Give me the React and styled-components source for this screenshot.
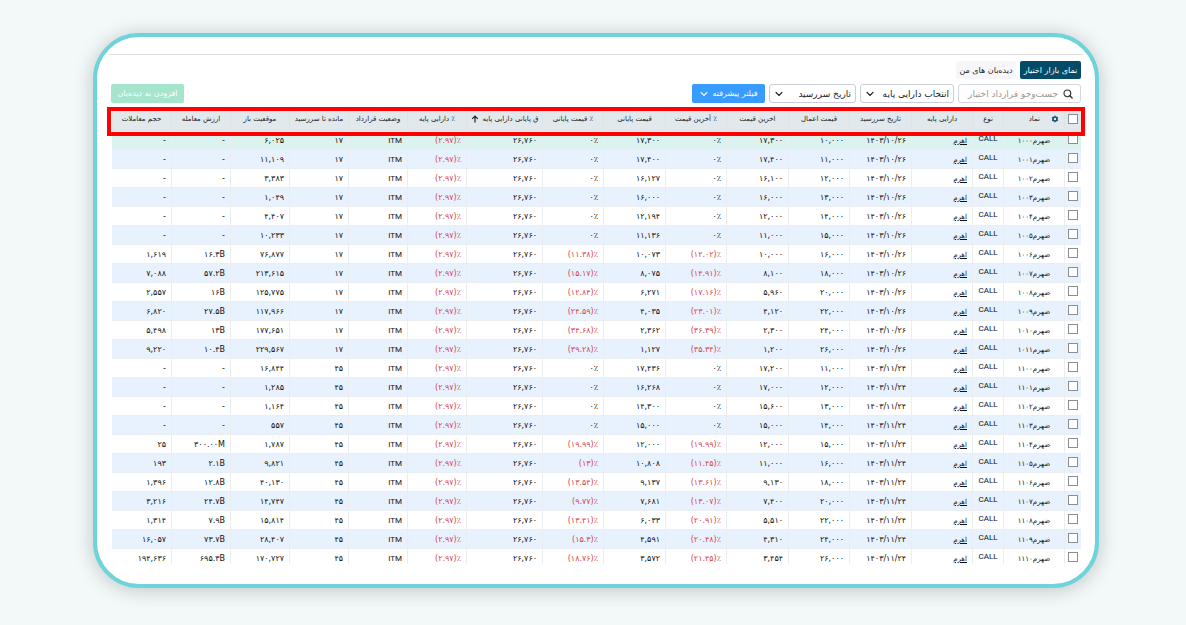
import React from 'react'
import styled, { createGlobalStyle } from 'styled-components'

const columns = [
  { key: 'check', width: 17 },
  { key: 'symbol', width: 61, title: 'نماد' },
  { key: 'type', width: 31, title: 'نوع' },
  { key: 'base', width: 61, title: 'دارایی پایه' },
  { key: 'date', width: 62, title: 'تاریخ سررسید' },
  { key: 'strike', width: 61, title: 'قیمت اعمال' },
  { key: 'last', width: 62, title: 'اخرین قیمت' },
  { key: 'lastPct', width: 61, title: '٪ آخرین قیمت' },
  { key: 'close', width: 62, title: 'قیمت پایانی' },
  { key: 'closePct', width: 61, title: '٪ قیمت پایانی' },
  { key: 'baseClose', width: 76, title: 'ق پایانی دارایی پایه' },
  { key: 'basePct', width: 59, title: '٪ دارایی پایه' },
  { key: 'status', width: 59, title: 'وضعیت قرارداد' },
  { key: 'days', width: 59, title: 'مانده تا سررسید' },
  { key: 'open', width: 59, title: 'موقعیت باز' },
  { key: 'value', width: 59, title: 'ارزش معامله' },
  { key: 'volume', width: 60, title: 'حجم معاملات' },
]

// symbol, strike, last, last %, close, close %, open positions, value, volume
const contracts = [
  ['1000', '10,000', '17,300', '0', '17,300', '0', '6,025', '-', '-'],
  ['1001', '11,000', '17,400', '0', '17,400', '0', '11,109', '-', '-'],
  ['1002', '12,000', '16,100', '0', '16,127', '0', '3,383', '-', '-'],
  ['1003', '13,000', '16,000', '0', '16,000', '0', '1,049', '-', '-'],
  ['1004', '14,000', '12,000', '0', '12,194', '0', '4,407', '-', '-'],
  ['1005', '15,000', '11,000', '0', '11,136', '0', '10,233', '-', '-'],
  ['1006', '16,000', '10,000', '(12.02)', '10,073', '(11.38)', '76,877', '16.3B', '1,619'],
  ['1007', '18,000', '8,100', '(14.91)', '8,075', '(15.17)', '213,615', '57.2B', '7,088'],
  ['1008', '20,000', '5,960', '(17.16)', '6,271', '(12.84)', '125,775', '16B', '2,557'],
  ['1009', '22,000', '4,120', '(23.01)', '4,035', '(24.59)', '117,966', '27.5B', '6,820'],
  ['1010', '24,000', '2,300', '(36.39)', '2,362', '(34.68)', '177,651', '13B', '5,498'],
  ['1011', '26,000', '1,200', '(35.34)', '1,127', '(39.28)', '229,567', '10.4B', '9,220'],
  ['1100', '11,000', '17,200', '0', '17,436', '0', '16,844', '-', '-'],
  ['1101', '12,000', '17,000', '0', '16,268', '0', '1,285', '-', '-'],
  ['1102', '13,000', '15,600', '0', '14,300', '0', '1,164', '-', '-'],
  ['1103', '14,000', '15,000', '0', '15,000', '0', '557', '-', '-'],
  ['1104', '15,000', '12,000', '(19.99)', '12,000', '(19.99)', '1,787', '300.00M', '25'],
  ['1105', '16,000', '11,000', '(11.45)', '10,808', '(13)', '9,821', '2.1B', '193'],
  ['1106', '18,000', '9,130', '(13.61)', '9,137', '(13.54)', '40,130', '12.8B', '1,396'],
  ['1107', '20,000', '7,400', '(13.07)', '7,681', '(9.77)', '14,747', '24.7B', '3,216'],
  ['1108', '22,000', '5,510', '(20.91)', '6,033', '(13.41)', '15,814', '7.9B', '1,314'],
  ['1109', '24,000', '4,310', '(20.48)', '4,591', '(15.3)', '28,407', '73.7B', '16,057'],
  ['1110', '26,000', '3,454', '(21.45)', '3,572', '(18.76)', '170,727', '695.3B', '194,636'],
]

const fa = (text) => text.replace(/\d/g, (d) => '۰۱۲۳۴۵۶۷۸۹'[d])

const Chevron = () => (
  <svg width='8' height='8' viewBox='0 0 8 8' aria-hidden='true'>
    <path d='M1 2.3 4 5.5 7 2.3' fill='none' stroke='currentColor' strokeWidth='1.1' strokeLinecap='round' />
  </svg>
)

const SearchIcon = () => (
  <svg width='10' height='10' viewBox='0 0 11 11' aria-hidden='true'>
    <circle cx='4.8' cy='4.8' r='3.7' fill='none' stroke='#333' strokeWidth='1.3' />
    <path d='M7.5 7.5 10 10' stroke='#333' strokeWidth='1.6' strokeLinecap='round' />
  </svg>
)

const GearIcon = () => (
  <svg width='8' height='8' viewBox='0 0 8 8' aria-hidden='true'>
    <circle cx='4' cy='4' r='2' fill='none' stroke='#0b5272' strokeWidth='1.6' />
    <path
      d='M4 .8v.8M4 6.4v.8M1.2 2.4l.8.4M6 5.2l.8.4M6.8 2.4l-.8.4M2 5.2l-.8.4'
      stroke='#0b5272'
      strokeWidth='1.6'
    />
  </svg>
)

const ArrowUp = () => (
  <svg width='8' height='8' viewBox='0 0 8 8' aria-hidden='true'>
    <path d='M4 7.4V1.2M1.2 3.8 4 1l2.8 2.8' fill='none' stroke='#222' strokeWidth='1.2' />
  </svg>
)

const Picker = ({ label, width }) => (
  <PickerBox $width={width}>
    <select aria-label={label}>
      <option>{label}</option>
    </select>
    <Chevron />
  </PickerBox>
)

const HeaderCell = ({ column }) => {
  if (column.key === 'check') {
    return (
      <th>
        <Check type='checkbox' aria-label='انتخاب همه' />
      </th>
    )
  }
  return (
    <th>
      {column.key === 'symbol' ? (
        <SymbolTitle>
          <IconButton type='button' aria-label='تنظیمات ستون‌ها'>
            <GearIcon />
          </IconButton>
          {column.title}
        </SymbolTitle>
      ) : column.key === 'baseClose' ? (
        <SortTitle>
          {column.title}
          <ArrowUp />
        </SortTitle>
      ) : (
        column.title
      )}
    </th>
  )
}

const Percent = ({ value }) => <Num $down={value !== '0'}>{fa(value)}٪</Num>

const ContractRow = ({ contract }) => {
  const [symbol, strike, last, lastPct, close, closePct, open, value, volume] = contract
  const far = symbol.startsWith('11')
  return (
    <tr>
      <CheckCell>
        <Check type='checkbox' aria-label={'ضهرم' + fa(symbol)} />
      </CheckCell>
      <SymbolCell>ضهرم{fa(symbol)}</SymbolCell>
      <TypeCell>CALL</TypeCell>
      <BaseCell>
        <a href='#ahrom'>اهرم</a>
      </BaseCell>
      <Num>{fa(far ? '1403/11/24' : '1403/10/26')}</Num>
      <Num>{fa(strike)}</Num>
      <Num>{fa(last)}</Num>
      <Percent value={lastPct} />
      <Num>{fa(close)}</Num>
      <Percent value={closePct} />
      <Num>{fa('26,760')}</Num>
      <Percent value='(2.97)' />
      <Status>ITM</Status>
      <Num>{fa(far ? '45' : '17')}</Num>
      <Num>{fa(open)}</Num>
      <Num>{fa(value)}</Num>
      <Num>{fa(volume)}</Num>
    </tr>
  )
}

const App = () => {
  return (
    <Page dir='rtl' lang='fa'>
      <GlobalStyle />
      <Frame>
        <Tabs>
          <Tab type='button' $active>
            نمای بازار اختیار
          </Tab>
          <Tab type='button'>دیده‌بان های من</Tab>
        </Tabs>
        <Toolbar>
          <Search>
            <SearchIcon />
            <input type='text' aria-label='جست‌وجو' placeholder='جست‌وجو قرارداد اختیار' />
          </Search>
          <Picker label='انتخاب دارایی پایه' width={94} />
          <Picker label='تاریخ سررسید' width={87} />
          <FilterButton type='button'>
            فیلتر پیشرفته
            <Chevron />
          </FilterButton>
          <AddButton type='button'>افزودن به دیده‌بان</AddButton>
        </Toolbar>
        <Board>
          <Clip>
            <Table>
              <colgroup>
                {columns.map((c) => (
                  <Col key={c.key} $width={c.width} />
                ))}
              </colgroup>
              <thead>
                <tr>
                  {columns.map((c) => (
                    <HeaderCell key={c.key} column={c} />
                  ))}
                </tr>
              </thead>
              <tbody>
                {contracts.map((c) => (
                  <ContractRow key={c[0]} contract={c} />
                ))}
              </tbody>
            </Table>
          </Clip>
          <Highlight />
        </Board>
      </Frame>
    </Page>
  )
}

const GlobalStyle = createGlobalStyle`
  * {
    box-sizing: border-box;
  }
  body {
    margin: 0;
    background: #f3f9f9;
    color: #111;
    font-family: 'DejaVu Sans', sans-serif;
    font-size: 8px;
  }
  button, input, select {
    font-family: inherit;
    margin: 0;
  }
`

const Page = styled.main`
  display: flex;
  height: 100vh;
  padding: 33px 87px 37px 93px;
`

const Frame = styled.section`
  flex: 1;
  min-width: 0;
  display: flex;
  flex-direction: column;
  padding: 17px 12px 20px;
  background: #fff;
  border: 4px solid #6fd3da;
  border-radius: 46px;
  box-shadow: 0 2px 20px rgba(0, 0, 0, 0.22);
`

const Tabs = styled.nav`
  display: flex;
  gap: 4px;
  padding: 6px 2px 5px 0;
  border-top: 1px solid #dedede;
`

const Tab = styled.button`
  width: ${(p) => (p.$active ? '61px' : '60px')};
  height: 18px;
  padding: 0;
  border: 0;
  border-radius: 2px;
  background: ${(p) => (p.$active ? '#034b67' : '#f7f7f9')};
  color: ${(p) => (p.$active ? '#fff' : '#222')};
  font-size: 8px;
  white-space: nowrap;
`

const Toolbar = styled.div`
  display: flex;
  gap: 4px;
  padding: 0 2px;
`

const Search = styled.label`
  display: flex;
  align-items: center;
  gap: 5px;
  width: 123px;
  height: 19px;
  padding: 0 7px;
  border: 1px solid #d3d8df;
  border-radius: 3px;
  input {
    flex: 1;
    min-width: 0;
    padding: 0;
    border: 0;
    outline: 0;
    background: none;
    font-size: 9px;
  }
  input::placeholder {
    color: #999;
  }
`

const PickerBox = styled.div`
  display: flex;
  align-items: center;
  width: ${(p) => p.$width}px;
  height: 19px;
  padding: 0 4px 0 5px;
  border: 1px solid #c9ced8;
  border-radius: 3px;
  select {
    flex: 1;
    min-width: 0;
    padding: 0;
    border: 0;
    appearance: none;
    background: none;
    color: #222;
    font-size: 9px;
  }
`

const FilterButton = styled.button`
  display: flex;
  align-items: center;
  justify-content: center;
  gap: 5px;
  width: 73px;
  height: 19px;
  padding: 0;
  border: 0;
  border-radius: 2px;
  background: #379bff;
  color: #fff;
  font-size: 8px;
  white-space: nowrap;
`

const AddButton = styled(FilterButton)`
  margin-right: auto;
  background: #a5e5ce;
`

const Board = styled.div`
  flex: 1;
  min-height: 0;
  position: relative;
  display: flex;
  margin-top: 7px;
  padding: 0 2px 0 3px;
`

const Clip = styled.div`
  flex: 1;
  overflow: hidden;
`

const Highlight = styled.div`
  position: absolute;
  top: -3px;
  left: -2px;
  right: -2px;
  height: 29px;
  border: 4px solid #fe0000;
  pointer-events: none;
`

const Col = styled.col`
  width: ${(p) => p.$width}px;
`

const Table = styled.table`
  width: 100%;
  table-layout: fixed;
  border-collapse: separate;
  border-spacing: 0;
  th,
  td {
    height: 19px;
    padding: 0;
    border-left: 1px solid #ebeef0;
    border-bottom: 1px solid #ebeef0;
    white-space: nowrap;
    line-height: 12px;
  }
  th {
    height: 21px;
    padding-bottom: 2px;
    background: #e2e9ed;
    border-color: #dde3e7;
    color: #222;
    font-size: 7px;
    font-weight: normal;
    text-align: center;
  }
  tbody tr:nth-child(even) {
    background: #e7f2fe;
  }
  tbody tr:first-child {
    background: #dcf2ee;
  }
`

const Check = styled.input`
  display: block;
  appearance: none;
  width: 10px;
  height: 10px;
  margin: 0 auto !important;
  border: 1px solid #8b8f94;
  background: #fff;
`

const SymbolTitle = styled.span`
  display: flex;
  align-items: center;
  gap: 11px;
  padding-right: 5px;
`

const SortTitle = styled.span`
  display: flex;
  align-items: center;
  justify-content: center;
  gap: 4px;
`

const IconButton = styled.button`
  display: flex;
  padding: 0;
  border: 0;
  background: none;
`

const CheckCell = styled.td`
  padding-bottom: 2px !important;
`

const SymbolCell = styled.td`
  padding-top: 2px !important;
  font-size: 7px;
  text-align: center;
`

const TypeCell = styled.td`
  padding-bottom: 3px !important;
  font-family: Roboto, sans-serif;
  font-size: 8px;
  text-align: center;
`

const BaseCell = styled.td`
  padding: 2px 5px 0 0 !important;
  text-align: right;
  font-size: 7px;
  a {
    color: inherit;
  }
`

const Num = styled.td`
  padding: 2px 4px 0 0 !important;
  direction: ltr;
  text-align: right;
  color: ${(p) => (p.$down ? '#d9434e' : '#111')};
`

const Status = styled(Num)`
  font-family: Roboto, sans-serif;
`

export default App
